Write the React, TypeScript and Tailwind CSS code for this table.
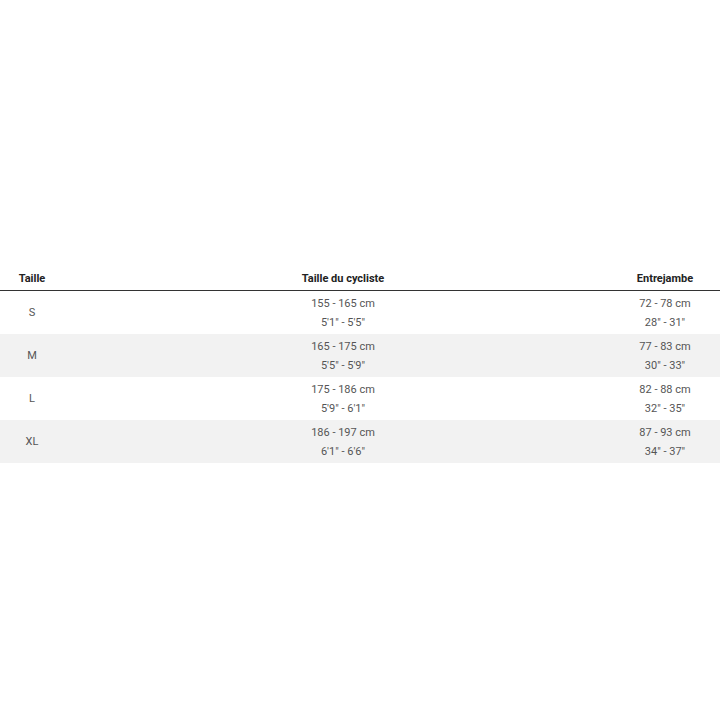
import React from "react";

const rows = [
  { s: "S", h: ["155 - 165 cm", "5'1\" - 5'5\""], e: ["72 - 78 cm", "28\" - 31\""] },
  { s: "M", h: ["165 - 175 cm", "5'5\" - 5'9\""], e: ["77 - 83 cm", "30\" - 33\""] },
  { s: "L", h: ["175 - 186 cm", "5'9\" - 6'1\""], e: ["82 - 88 cm", "32\" - 35\""] },
  { s: "XL", h: ["186 - 197 cm", "6'1\" - 6'6\""], e: ["87 - 93 cm", "34\" - 37\""] },
];

export default function App() {
  return (
    <div
      className="w-[720px] h-[720px] bg-white pt-[265px]"
      style={{ fontFamily: "Roboto, 'Liberation Sans', sans-serif" }}
    >
      <div className="grid grid-cols-[64px_558px_86px] pr-[12px] h-[26px] pt-[4px] items-center text-[11px] font-bold text-[#222] border-b border-[#333]">
        <div className="text-center">Taille</div>
        <div className="text-center">Taille du cycliste</div>
        <div className="text-center">Entrejambe</div>
      </div>
      {rows.map((r, i) => (
        <div
          key={r.s}
          className={`grid grid-cols-[64px_558px_86px] pr-[12px] h-[43px] items-center text-[11px] leading-[19px] text-[#555] ${
            i % 2 === 1 ? "bg-[#f2f2f2]" : "bg-white"
          }`}
        >
          <div className="text-center">{r.s}</div>
          <div className="text-center">
            <div>{r.h[0]}</div>
            <div>{r.h[1]}</div>
          </div>
          <div className="text-center">
            <div>{r.e[0]}</div>
            <div>{r.e[1]}</div>
          </div>
        </div>
      ))}
    </div>
  );
}
